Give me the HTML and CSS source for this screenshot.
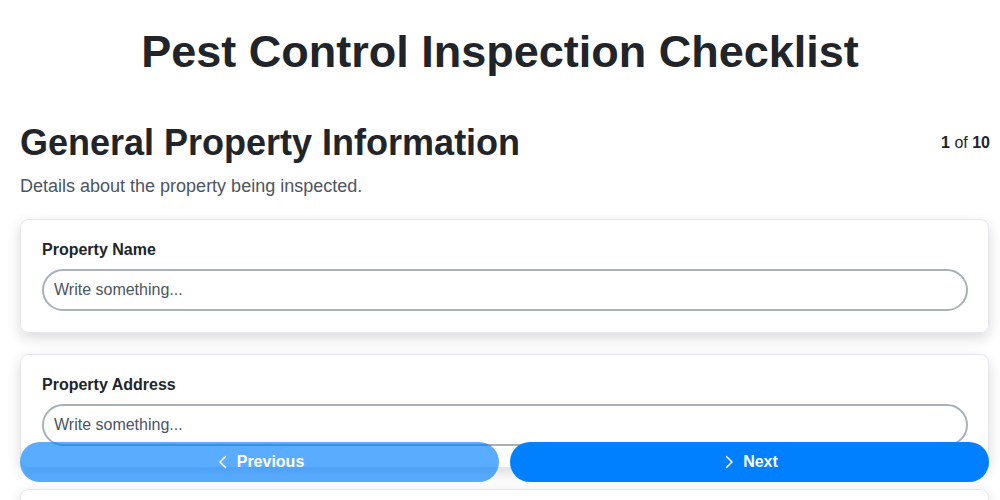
FILE: index.html
```html
<!DOCTYPE html>
<html lang="en">
<head>
  <meta charset="UTF-8">
  <meta name="viewport" content="width=device-width, initial-scale=1.0">
  <title>Pest Control Inspection Checklist</title>
  <link rel="stylesheet" href="styles.css">
</head>
<body>
  <h1 class="title">Pest Control Inspection Checklist</h1>

  <div class="page">
    <div class="section-head">
      <h2>General Property Information</h2>
      <div class="step"><b>1</b> of <b>10</b></div>
    </div>
    <p class="section-desc">Details about the property being inspected.</p>

    <div class="card">
      <label for="propName">Property Name</label>
      <input type="text" id="propName" placeholder="Write something...">
    </div>

    <div class="card">
      <label for="propAddress">Property Address</label>
      <input type="text" id="propAddress" placeholder="Write something...">
    </div>

    <div class="card">
      <label for="propType">Property Type</label>
      <input type="text" id="propType" placeholder="Write something...">
    </div>
  </div>

  <div class="nav">
    <button class="btn btn-prev" disabled>
      <svg width="16" height="16" viewBox="0 0 16 16" fill="none" stroke="currentColor" stroke-width="1.6" stroke-linecap="round" stroke-linejoin="round"><path d="M10.5 2.5 5 8l5.5 5.5"/></svg>
      Previous
    </button>
    <button class="btn btn-next">
      <svg width="16" height="16" viewBox="0 0 16 16" fill="none" stroke="currentColor" stroke-width="1.6" stroke-linecap="round" stroke-linejoin="round"><path d="M5.5 2.5 11 8l-5.5 5.5"/></svg>
      Next
    </button>
  </div>
</body>
</html>
```

FILE: styles.css
```css
body {
  margin: 0;
  font-family: "Liberation Sans", Arial, sans-serif;
  color: #212529;
  background: #fff;
}
.title {
  margin: 0;
  padding-top: 26px;
  font-size: 45px;
  line-height: 52px;
  text-align: center;
}
.page {
  padding: 0 11px 100px 20px;
}
.section-head {
  display: flex;
  justify-content: space-between;
  align-items: center;
  margin-top: 43px;
}
.section-head h2 {
  margin: 0;
  font-size: 36px;
  line-height: 44px;
}
.step {
  font-size: 16px;
  margin-right: -1px;
}
.section-desc {
  margin: 11px 0 23px;
  font-size: 18px;
  line-height: 20px;
  color: #4b5563;
}
.card {
  display: flex;
  flex-direction: column;
  border: 1px solid #e5e7eb;
  border-radius: 8px;
  padding: 21px 20px 21px 21px;
  margin-bottom: 21px;
  box-shadow: 0 5px 14px rgba(0, 0, 0, 0.15);
}
.card label {
  font-weight: bold;
  font-size: 16px;
  margin-bottom: 10px;
}
.card input {
  height: 42px;
  box-sizing: border-box;
  border: 2px solid #a9b0b8;
  border-radius: 999px;
  padding: 0 10px;
  font-family: inherit;
  font-size: 16px;
  color: #212529;
}
.card input::placeholder {
  color: #4b5563;
}
.nav {
  position: fixed;
  left: 20px;
  right: 11px;
  bottom: 18px;
  display: flex;
  gap: 11px;
}
.btn {
  flex: 1;
  height: 40px;
  border: none;
  border-radius: 999px;
  background: #0080ff;
  color: #fff;
  font-family: inherit;
  font-size: 16px;
  font-weight: bold;
  display: flex;
  align-items: center;
  justify-content: center;
  gap: 6px;
}
.btn-prev {
  opacity: 0.65;
}
```
